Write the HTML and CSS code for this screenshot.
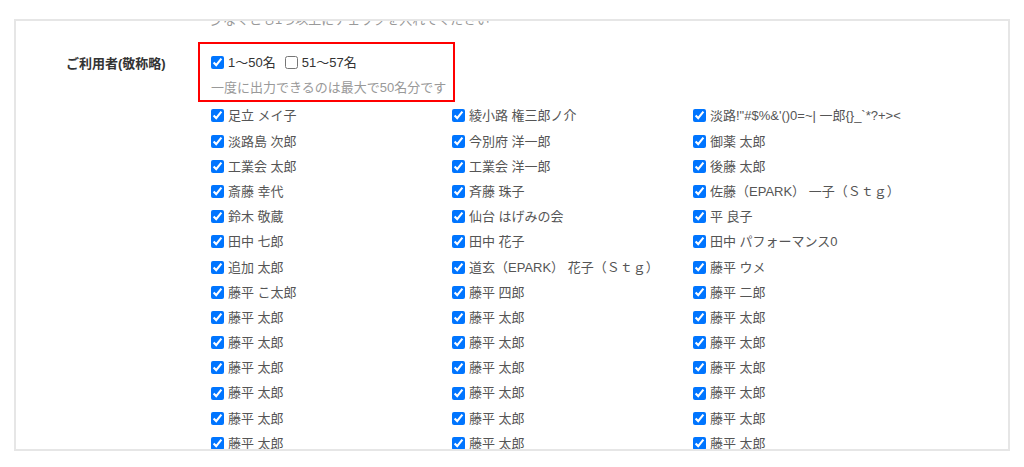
FILE: index.html
```html
<!DOCTYPE html>
<html lang="ja">
<head>
<meta charset="utf-8">
<title>ご利用者</title>
<link rel="stylesheet" href="styles.css">
</head>
<body>
<div class="panel">
  <div class="scroller">
    <div class="hint-row">
      <div class="hint">少なくとも1つ以上にチェックを入れてください</div>
    </div>
    <div class="form-row">
      <div class="form-label">ご利用者(敬称略)</div>
      <div class="form-value">
        <div class="range-box">
          <div class="range-line">
            <label class="range-opt"><input type="checkbox" checked><span>1<span class="wave">〜</span>50名</span></label>
            <label class="range-opt"><input type="checkbox"><span>51<span class="wave">〜</span>57名</span></label>
          </div>
          <div class="range-note">一度に出力できるのは最大で50名分です</div>
        </div>
        <div class="name-grid">
          <label class="name"><input type="checkbox" checked><span>足立 メイ子</span></label>
          <label class="name"><input type="checkbox" checked><span>綾小路 権三郎ノ介</span></label>
          <label class="name"><input type="checkbox" checked><span>淡路!&quot;#$%&amp;'()0=~| 一郎{}_`*?+&gt;&lt;</span></label>
          <label class="name"><input type="checkbox" checked><span>淡路島 次郎</span></label>
          <label class="name"><input type="checkbox" checked><span>今別府 洋一郎</span></label>
          <label class="name"><input type="checkbox" checked><span>御薬 太郎</span></label>
          <label class="name"><input type="checkbox" checked><span>工業会 太郎</span></label>
          <label class="name"><input type="checkbox" checked><span>工業会 洋一郎</span></label>
          <label class="name"><input type="checkbox" checked><span>後藤 太郎</span></label>
          <label class="name"><input type="checkbox" checked><span>斎藤 幸代</span></label>
          <label class="name"><input type="checkbox" checked><span>斉藤 珠子</span></label>
          <label class="name"><input type="checkbox" checked><span>佐藤（EPARK） 一子（Ｓｔｇ）</span></label>
          <label class="name"><input type="checkbox" checked><span>鈴木 敬蔵</span></label>
          <label class="name"><input type="checkbox" checked><span>仙台 はげみの会</span></label>
          <label class="name"><input type="checkbox" checked><span>平 良子</span></label>
          <label class="name"><input type="checkbox" checked><span>田中 七郎</span></label>
          <label class="name"><input type="checkbox" checked><span>田中 花子</span></label>
          <label class="name"><input type="checkbox" checked><span>田中 パフォーマンス0</span></label>
          <label class="name"><input type="checkbox" checked><span>追加 太郎</span></label>
          <label class="name"><input type="checkbox" checked><span>道玄（EPARK） 花子（Ｓｔｇ）</span></label>
          <label class="name"><input type="checkbox" checked><span>藤平 ウメ</span></label>
          <label class="name"><input type="checkbox" checked><span>藤平 こ太郎</span></label>
          <label class="name"><input type="checkbox" checked><span>藤平 四郎</span></label>
          <label class="name"><input type="checkbox" checked><span>藤平 二郎</span></label>
          <label class="name"><input type="checkbox" checked><span>藤平 太郎</span></label>
          <label class="name"><input type="checkbox" checked><span>藤平 太郎</span></label>
          <label class="name"><input type="checkbox" checked><span>藤平 太郎</span></label>
          <label class="name"><input type="checkbox" checked><span>藤平 太郎</span></label>
          <label class="name"><input type="checkbox" checked><span>藤平 太郎</span></label>
          <label class="name"><input type="checkbox" checked><span>藤平 太郎</span></label>
          <label class="name"><input type="checkbox" checked><span>藤平 太郎</span></label>
          <label class="name"><input type="checkbox" checked><span>藤平 太郎</span></label>
          <label class="name"><input type="checkbox" checked><span>藤平 太郎</span></label>
          <label class="name"><input type="checkbox" checked><span>藤平 太郎</span></label>
          <label class="name"><input type="checkbox" checked><span>藤平 太郎</span></label>
          <label class="name"><input type="checkbox" checked><span>藤平 太郎</span></label>
          <label class="name"><input type="checkbox" checked><span>藤平 太郎</span></label>
          <label class="name"><input type="checkbox" checked><span>藤平 太郎</span></label>
          <label class="name"><input type="checkbox" checked><span>藤平 太郎</span></label>
          <label class="name"><input type="checkbox" checked><span>藤平 太郎</span></label>
          <label class="name"><input type="checkbox" checked><span>藤平 太郎</span></label>
          <label class="name"><input type="checkbox" checked><span>藤平 太郎</span></label>
          <label class="name"><input type="checkbox" checked><span>藤平 太郎</span></label>
          <label class="name"><input type="checkbox" checked><span>藤平 太郎</span></label>
          <label class="name"><input type="checkbox" checked><span>藤平 太郎</span></label>
        </div>
      </div>
    </div>
  </div>
</div>
</body>
</html>
```

FILE: styles.css
```css
html, body {
  margin: 0;
  padding: 0;
  background: #ffffff;
}

body {
  font-family: "Liberation Sans", "Noto Sans CJK JP", sans-serif;
  font-size: 13px;
  color: #555555;
  padding: 19px 14px 0 14px;
}

.panel {
  width: 996px;
  height: 432px;
  box-sizing: border-box;
  border: 2px solid #e6e6e6;
  background: #ffffff;
}

.scroller {
  height: 100%;
  overflow: hidden;
}

.hint-row {
  margin-top: -11px;
  padding-left: 194px;
  height: 19.5px;
}

.hint {
  line-height: 19.5px;
  color: #999999;
  white-space: nowrap;
}

.form-row {
  display: flex;
  margin-top: 12.5px;
}

.form-label {
  width: 132px;
  flex: none;
  padding-left: 50px;
  padding-top: 12px;
  line-height: 19.5px;
  font-weight: bold;
  color: #333333;
}

.form-value {
  flex: 1;
  display: flex;
  flex-direction: column;
  align-items: flex-start;
}

.range-box {
  min-width: 256px;
  box-sizing: border-box;
  border: 2px solid #ff0000;
  padding: 8px 7px 3px 11px;
  white-space: nowrap;
}

.range-line {
  display: flex;
  gap: 9px;
  line-height: 19.5px;
  color: #333333;
}

.wave {
  font-family: "Noto Sans CJK JP", sans-serif;
}

.range-opt {
  display: flex;
  align-items: center;
}

.range-opt input,
.name input {
  margin: 0 4px 0 0;
  width: 13px;
  height: 13px;
  flex: none;
}

.range-note {
  margin-top: 5px;
  line-height: 19.5px;
  color: #999999;
}

.name-grid {
  display: grid;
  grid-template-columns: 241px 241px 241px;
  grid-auto-rows: 19.2px;
  row-gap: 6px;
  padding-left: 13px;
  margin-top: 4.4px;
}

.name {
  display: flex;
  align-items: center;
  line-height: 19.2px;
  white-space: nowrap;
  color: #555555;
}
```
